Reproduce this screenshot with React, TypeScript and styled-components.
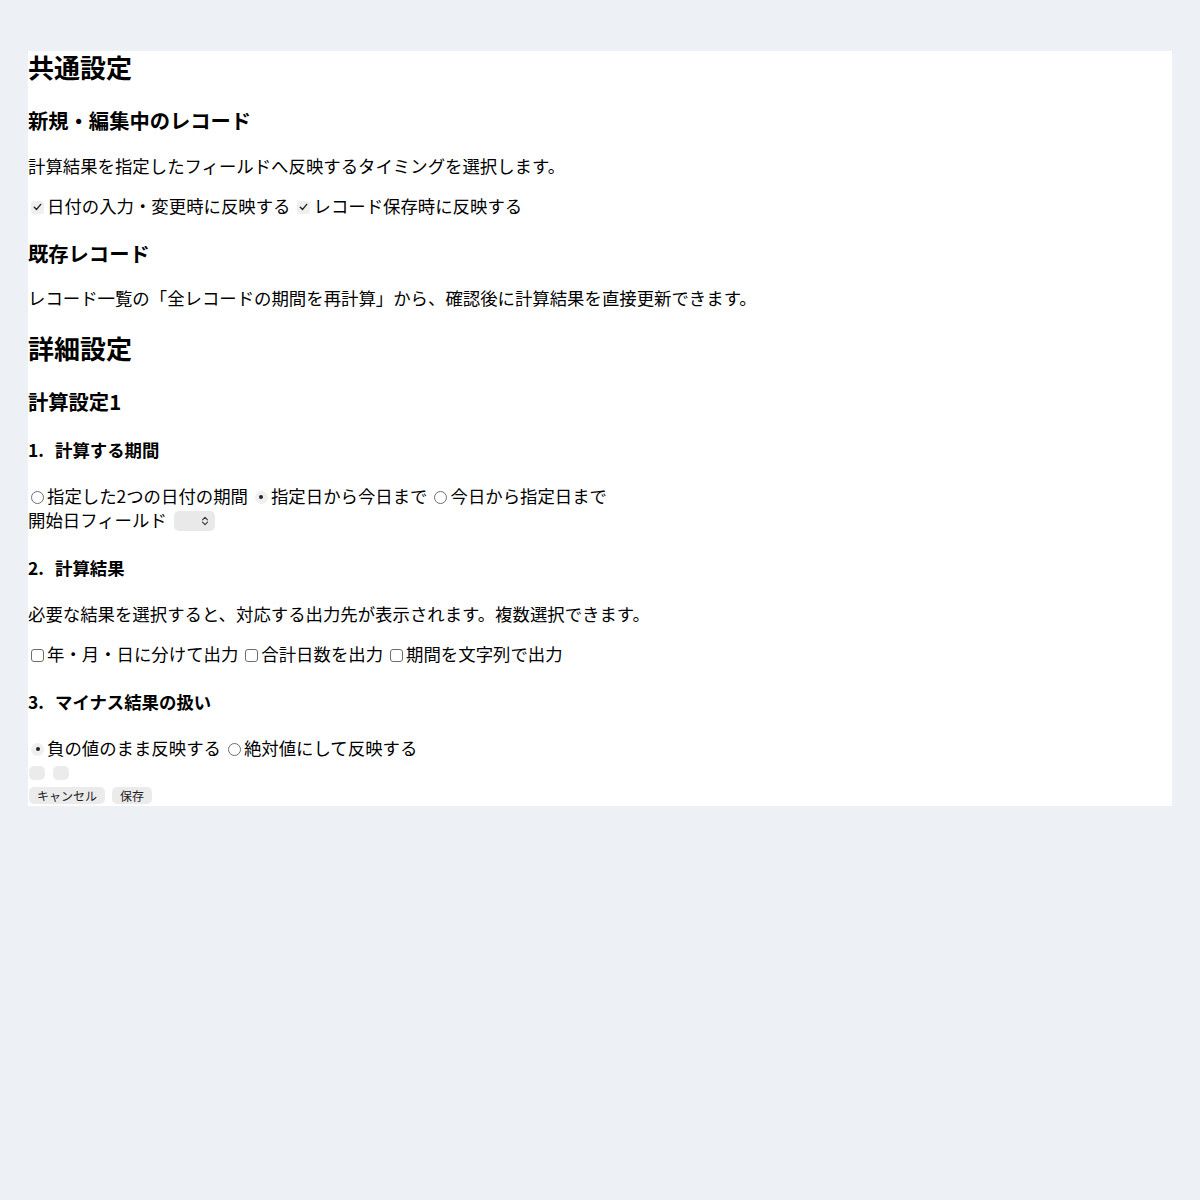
import React from "react";
import styled, { createGlobalStyle } from "styled-components";

const GlobalStyle = createGlobalStyle`
  html, body { margin: 0; padding: 0; }
  body {
    background: #edf0f5;
    font-family: "Noto Sans CJK JP", "Noto Sans", sans-serif;
    font-size: 17.4px;
    color: #000;
  }
`;

const Page = styled.div`
  padding: 51px 28px 0;
`;

const Panel = styled.main`
  background: #fff;
  display: flex;
  flex-direction: column;
`;

const PageTitle = styled.h2<{ $top?: number }>`
  margin: ${(p) => p.$top ?? 0}px 0 0;
  font-size: 26px;
  line-height: 32px;
  padding-bottom: 4px;
  font-weight: 700;
`;

const SubTitle = styled.h3<{ $top: number }>`
  margin: ${(p) => p.$top}px 0 0;
  font-size: 20.3px;
  line-height: 27px;
  padding-bottom: 1px;
  font-weight: 700;
`;

const StepTitle = styled.h4<{ $top: number }>`
  margin: ${(p) => p.$top}px 0 0;
  font-size: 17.4px;
  line-height: 24px;
  font-weight: 700;
  display: flex;
`;

const StepNo = styled.span`
  width: 27px;
`;

const Text = styled.p<{ $top: number }>`
  margin: ${(p) => p.$top}px 0 0;
  line-height: 24px;
`;

const OptionRow = styled.div<{ $top: number }>`
  margin-top: ${(p) => p.$top}px;
  display: flex;
  align-items: center;
  gap: 4px;
  line-height: 24px;
`;

const Option = styled.label`
  display: inline-flex;
  align-items: center;
`;

const Box = styled.span<{ $checked?: boolean }>`
  width: 13px;
  height: 13px;
  margin: 2px 3px 0 3px;
  box-sizing: border-box;
  border-radius: 3px;
  display: inline-flex;
  align-items: center;
  justify-content: center;
  background: ${(p) => (p.$checked ? "#efefef" : "#fff")};
  border: ${(p) => (p.$checked ? "none" : "1px solid #6d6d6d")};
`;

const Round = styled(Box)`
  border-radius: 50%;
`;

const Dot = styled.span`
  width: 4px;
  height: 4px;
  border-radius: 50%;
  background: #222;
`;

const FieldRow = styled.div`
  display: flex;
  align-items: center;
  gap: 7px;
  line-height: 24px;
`;

const Select = styled.span`
  width: 41px;
  height: 20px;
  border-radius: 5px;
  background: #e9e9e9;
  display: inline-flex;
  align-items: center;
  justify-content: flex-end;
  padding-right: 6px;
  box-sizing: border-box;
  margin-top: 2px;
`;

const EmptyRow = styled.div`
  display: flex;
  gap: 8px;
  margin-top: 6px;
  padding-left: 1px;
`;

const EmptyButton = styled.span`
  width: 16px;
  height: 14px;
  border-radius: 5px;
  background: #ebebeb;
`;

const ButtonRow = styled.div`
  display: flex;
  gap: 7px;
  margin-top: 7px;
  padding: 0 0 2px 1px;
`;

const Button = styled.button`
  font-family: "Noto Sans CJK JP", sans-serif;
  font-size: 12px;
  line-height: 17px;
  height: 17px;
  padding: 0 8px;
  border: none;
  border-radius: 5px;
  background: #ebebeb;
  color: #222;
`;

const Check = () => (
  <svg width="9" height="8" viewBox="0 0 9 8">
    <path d="M1.3 4.2 L3.6 6.4 L7.7 1.4" fill="none" stroke="#222" strokeWidth="1.4" strokeLinecap="round" strokeLinejoin="round" />
  </svg>
);

const CheckOpt = ({ checked, label }: { checked?: boolean; label: string }) => (
  <Option>
    <Box $checked={checked}>{checked && <Check />}</Box>
    {label}
  </Option>
);

const RadioOpt = ({ checked, label }: { checked?: boolean; label: string }) => (
  <Option>
    <Round $checked={checked}>{checked && <Dot />}</Round>
    {label}
  </Option>
);

export default function App() {
  return (
    <>
      <GlobalStyle />
      <Page>
        <Panel>
          <PageTitle>共通設定</PageTitle>
          <SubTitle $top={20}>新規・編集中のレコード</SubTitle>
          <Text $top={19}>計算結果を指定したフィールドへ反映するタイミングを選択します。</Text>
          <OptionRow $top={16}>
            <CheckOpt checked label="日付の入力・変更時に反映する" />
            <CheckOpt checked label="レコード保存時に反映する" />
          </OptionRow>
          <SubTitle $top={22}>既存レコード</SubTitle>
          <Text $top={18}>レコード一覧の「全レコードの期間を再計算」から、確認後に計算結果を直接更新できます。</Text>
          <PageTitle $top={22}>詳細設定</PageTitle>
          <SubTitle $top={20}>計算設定1</SubTitle>
          <StepTitle $top={22}>
            <StepNo>1.</StepNo>計算する期間
          </StepTitle>
          <OptionRow $top={22}>
            <RadioOpt label="指定した2つの日付の期間" />
            <RadioOpt checked label="指定日から今日まで" />
            <RadioOpt label="今日から指定日まで" />
          </OptionRow>
          <FieldRow>
            開始日フィールド
            <Select>
              <svg width="8" height="10" viewBox="0 0 8 10">
                <path d="M1.5 3.8 L4 1.4 L6.5 3.8 M1.5 6.2 L4 8.6 L6.5 6.2" fill="none" stroke="#333" strokeWidth="1.1" strokeLinecap="round" strokeLinejoin="round" />
              </svg>
            </Select>
          </FieldRow>
          <StepTitle $top={24}>
            <StepNo>2.</StepNo>計算結果
          </StepTitle>
          <Text $top={22}>必要な結果を選択すると、対応する出力先が表示されます。複数選択できます。</Text>
          <OptionRow $top={16}>
            <CheckOpt label="年・月・日に分けて出力" />
            <CheckOpt label="合計日数を出力" />
            <CheckOpt label="期間を文字列で出力" />
          </OptionRow>
          <StepTitle $top={24}>
            <StepNo>3.</StepNo>マイナス結果の扱い
          </StepTitle>
          <OptionRow $top={22}>
            <RadioOpt checked label="負の値のまま反映する" />
            <RadioOpt label="絶対値にして反映する" />
          </OptionRow>
          <EmptyRow>
            <EmptyButton />
            <EmptyButton />
          </EmptyRow>
          <ButtonRow>
            <Button>キャンセル</Button>
            <Button>保存</Button>
          </ButtonRow>
        </Panel>
      </Page>
    </>
  );
}
